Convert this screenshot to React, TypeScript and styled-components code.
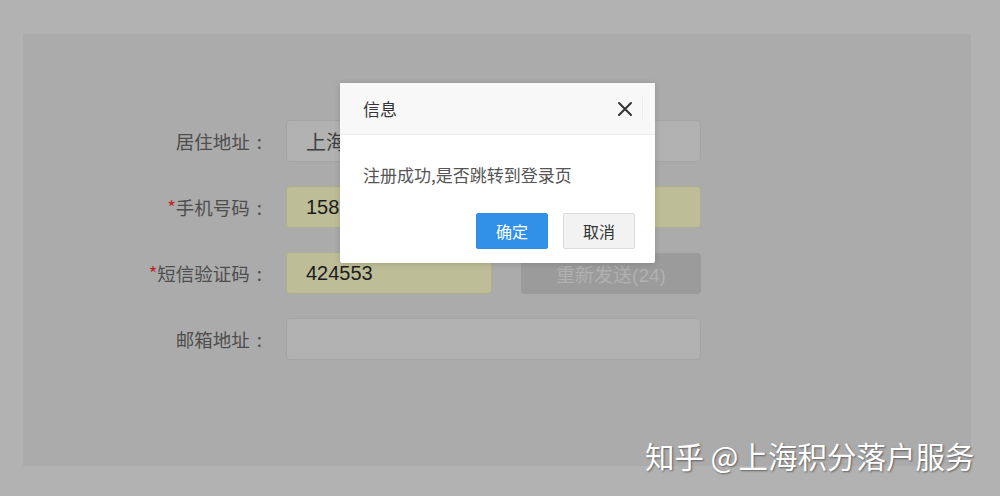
import styled, { createGlobalStyle } from "styled-components";

const GlobalStyle = createGlobalStyle`
  html, body {
    margin: 0;
    padding: 0;
    background: #b2b2b2;
  }
  body {
    font-family: "Liberation Sans", "Noto Sans CJK SC", sans-serif;
  }
`;

const Page = styled.div`
  position: relative;
  width: 1000px;
  height: 496px;
  box-sizing: border-box;
  padding: 34px 29px 30px 23px;
  overflow: hidden;
`;

const Panel = styled.div`
  height: 100%;
  background: #ababab;
  box-sizing: border-box;
  padding: 86px 0 0 0;
  display: flex;
  flex-direction: column;
  gap: 24px;
`;

const Row = styled.div`
  display: flex;
  align-items: center;
  gap: 24px;
`;

const Label = styled.label`
  width: 239px;
  text-align: right;
  font-family: "Noto Sans CJK SC", sans-serif;
  font-size: 18.5px;
  color: #4e4e4e;
  white-space: nowrap;
`;

const Star = styled.span`
  color: #b82a2a;
`;

const Colon = styled.span`
  margin-left: 7px;
`;

const Field = styled.div<{ $width: number; $filled?: boolean }>`
  width: ${(p) => p.$width}px;
  height: 42px;
  box-sizing: border-box;
  border: 1px solid ${(p) => (p.$filled ? "#adad8f" : "#a4a4a4")};
  border-radius: 4px;
  background: ${(p) => (p.$filled ? "#bdbd97" : "#b1b1b1")};
  padding: 0 19px;
  display: flex;
  align-items: center;
  font-size: 20px;
  color: ${(p) => (p.$filled ? "#1c1c1c" : "#3e3e3e")};
`;

const SendButton = styled.div`
  width: 180px;
  height: 41px;
  margin-left: 5px;
  border-radius: 4px;
  background: #9b9b9b;
  color: #b0b0b0;
  font-size: 19px;
  display: flex;
  align-items: center;
  justify-content: center;
`;

const Dialog = styled.div`
  position: absolute;
  left: 340px;
  top: 83px;
  width: 315px;
  height: 180px;
  background: #fff;
  border-radius: 2px;
  box-shadow: 0 1px 6px rgba(0, 0, 0, 0.15);
  display: flex;
  flex-direction: column;
  font-family: "Noto Sans CJK SC", sans-serif;
`;

const DialogHeader = styled.div`
  height: 52px;
  box-sizing: border-box;
  background: #f8f8f8;
  border-bottom: 1px solid #ececec;
  padding: 0 20px 0 23px;
  display: flex;
  align-items: center;
  justify-content: space-between;
  font-size: 17px;
  color: #333;
`;

const Close = styled.button`
  position: relative;
  width: 20px;
  height: 20px;
  padding: 0;
  border: none;
  background: transparent;
  display: flex;
  align-items: center;
  justify-content: center;
  &::after {
    content: "";
    position: absolute;
    right: -8px;
    top: -2px;
    width: 1px;
    height: 22px;
    background: #ececec;
  }
`;

const DialogBody = styled.div`
  padding: 27px 23px 0;
  font-size: 17px;
  color: #555;
  height: 78px;
  box-sizing: border-box;
`;

const DialogFooter = styled.div`
  display: flex;
  justify-content: flex-end;
  gap: 15px;
  padding: 0 20px;
`;

const DlgButton = styled.button<{ $primary?: boolean }>`
  width: 72px;
  height: 36px;
  border-radius: 2px;
  font-family: "Noto Sans CJK SC", sans-serif;
  font-size: 16px;
  border: 1px solid ${(p) => (p.$primary ? "#2f8de6" : "#dcdcdc")};
  background: ${(p) => (p.$primary ? "#3190e8" : "#f2f2f2")};
  color: ${(p) => (p.$primary ? "#fff" : "#333")};
  padding: 0;
`;

const Watermark = styled.div`
  position: absolute;
  left: 645px;
  top: 434px;
  font-family: "Noto Sans CJK SC", sans-serif;
  font-size: 29.5px;
  color: #fff;
  white-space: nowrap;
  text-shadow: 1px 1px 2px rgba(0, 0, 0, 0.45);
`;

export default function App() {
  return (
    <>
      <GlobalStyle />
      <Page>
        <Panel>
          <Row>
            <Label>居住地址<Colon>:</Colon></Label>
            <Field $width={415}>上海</Field>
          </Row>
          <Row>
            <Label><Star>*</Star>手机号码<Colon>:</Colon></Label>
            <Field $width={415} $filled>158</Field>
          </Row>
          <Row>
            <Label><Star>*</Star>短信验证码<Colon>:</Colon></Label>
            <Field $width={206} $filled>424553</Field>
            <SendButton>重新发送(24)</SendButton>
          </Row>
          <Row>
            <Label>邮箱地址<Colon>:</Colon></Label>
            <Field $width={415} />
          </Row>
        </Panel>

        <Dialog>
          <DialogHeader>
            <span>信息</span>
            <Close aria-label="关闭">
              <svg width="16" height="16" viewBox="0 0 16 16">
                <path d="M2 2 L14 14 M14 2 L2 14" stroke="#333" strokeWidth="2" strokeLinecap="round" />
              </svg>
            </Close>
          </DialogHeader>
          <DialogBody>注册成功,是否跳转到登录页</DialogBody>
          <DialogFooter>
            <DlgButton $primary>确定</DlgButton>
            <DlgButton>取消</DlgButton>
          </DialogFooter>
        </Dialog>

        <Watermark>知乎 @上海积分落户服务</Watermark>
      </Page>
    </>
  );
}
